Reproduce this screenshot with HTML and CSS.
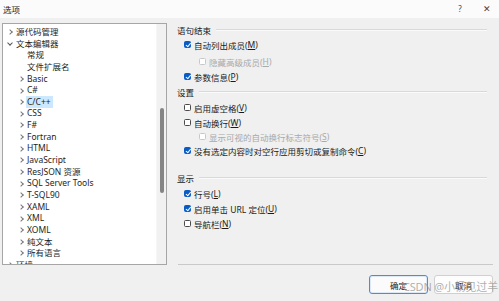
FILE: index.html
```html
<!DOCTYPE html>
<html>
<head>
<meta charset="utf-8">
<link rel="stylesheet" href="styles.css">
</head>
<body>
<div class="dialog">
  <div class="titlebar">
    <span class="title">选项</span>
    <span class="tb-help">?</span>
    <span class="tb-close">✕</span>
  </div>
  <div class="main">
    <div class="tree">
      <div class="tree-list">
        <div class="node l0"><span class="chev right"></span>源代码管理</div>
        <div class="node l0"><span class="chev down"></span>文本编辑器</div>
        <div class="node l1"><span class="chev none"></span>常规</div>
        <div class="node l1"><span class="chev none"></span>文件扩展名</div>
        <div class="node l1"><span class="chev right"></span>Basic</div>
        <div class="node l1"><span class="chev right"></span>C#</div>
        <div class="node l1"><span class="chev right"></span><span class="sel">C/C++</span></div>
        <div class="node l1"><span class="chev right"></span>CSS</div>
        <div class="node l1"><span class="chev right"></span>F#</div>
        <div class="node l1"><span class="chev right"></span>Fortran</div>
        <div class="node l1"><span class="chev right"></span>HTML</div>
        <div class="node l1"><span class="chev right"></span>JavaScript</div>
        <div class="node l1"><span class="chev right"></span>ResJSON 资源</div>
        <div class="node l1"><span class="chev right"></span>SQL Server Tools</div>
        <div class="node l1"><span class="chev right"></span>T-SQL90</div>
        <div class="node l1"><span class="chev right"></span>XAML</div>
        <div class="node l1"><span class="chev right"></span>XML</div>
        <div class="node l1"><span class="chev right"></span>XOML</div>
        <div class="node l1"><span class="chev right"></span>纯文本</div>
        <div class="node l1"><span class="chev right"></span>所有语言</div>
        <div class="node l0"><span class="chev right"></span>环境</div>
      </div>
      <div class="scrollbar"><div class="thumb"></div></div>
    </div>
    <div class="panel">
      <div class="group-head h1"><span>语句结束</span><i class="rule"></i></div>
      <div class="opt r-m"><span class="cb on"></span>自动列出成员(<u>M</u>)</div>
      <div class="opt sub dis r-h"><span class="cb"></span>隐藏高级成员(<u>H</u>)</div>
      <div class="opt r-p"><span class="cb on"></span>参数信息(<u>P</u>)</div>
      <div class="group-head h2"><span>设置</span><i class="rule"></i></div>
      <div class="opt r-v"><span class="cb"></span>启用虚空格(<u>V</u>)</div>
      <div class="opt r-w"><span class="cb"></span>自动换行(<u>W</u>)</div>
      <div class="opt sub dis r-s"><span class="cb"></span>显示可视的自动换行标志符号(<u>S</u>)</div>
      <div class="opt r-c"><span class="cb on"></span>没有选定内容时对空行应用剪切或复制命令(<u>C</u>)</div>
      <div class="group-head h3"><span>显示</span><i class="rule"></i></div>
      <div class="opt r-l"><span class="cb on"></span>行号(<u>L</u>)</div>
      <div class="opt r-u"><span class="cb on"></span>启用单击 URL 定位(<u>U</u>)</div>
      <div class="opt r-n"><span class="cb"></span>导航栏(<u>N</u>)</div>
      <div class="sep"></div>
    </div>
  </div>
  <div class="footer">
    <button class="btn default">确定</button>
    <button class="btn">取消</button>
    <span class="watermark">CSDN @小杨见过羊</span>
  </div>
</div>
</body>
</html>
```
FILE: styles.css
```css
* { box-sizing: border-box; }
html, body { margin: 0; padding: 0; }
body {
  width: 499px;
  height: 301px;
  overflow: hidden;
  background: #f0f0f0;
  font-family: "Noto Sans", "Noto Sans CJK SC", sans-serif;
  font-size: 8.5px;
  color: #1a1a1a;
}
.dialog { width: 499px; height: 301px; display: flex; flex-direction: column; position: relative; }
.titlebar {
  height: 18px;
  background: #fbfbfb;
  display: flex;
  align-items: center;
  padding: 0 0 1px 3px;
  font-size: 8.5px;
}
.title { flex: 1; }
.tb-help { width: 30px; text-align: center; font-size: 8px; color: #444; }
.tb-close { width: 24px; text-align: center; font-size: 9px; color: #444; }
.main { display: flex; height: 248px; padding: 5px 0 0 2px; }
.tree {
  width: 165px;
  height: 242px;
  background: #fff;
  border: 1px solid #a6a6a6;
  display: flex;
  overflow: hidden;
}
.tree-list { flex: 1; padding-top: 2px; overflow: hidden; }
.node {
  height: 11.65px;
  line-height: 11.65px;
  display: flex;
  align-items: center;
  white-space: nowrap;
  color: #1e1e1e;
}
.node.l0 { padding-left: 3px; }
.node.l1 { padding-left: 14px; }
.chev { width: 10px; height: 11px; display: inline-block; position: relative; flex: none; }
.chev.right::before {
  content: "";
  position: absolute;
  left: 2px; top: 4px;
  width: 3px; height: 3px;
  border-right: 1px solid #777;
  border-top: 1px solid #777;
  transform: rotate(45deg);
}
.chev.down::before {
  content: "";
  position: absolute;
  left: 2px; top: 3px;
  width: 3px; height: 3px;
  border-right: 1px solid #555;
  border-bottom: 1px solid #555;
  transform: rotate(45deg);
}
.sel { background: #cce8ff; padding: 0 2px 0 1px; margin-left: -1px; }
.scrollbar { width: 10px; background: #f1f1f1; border-left: 1px solid #f6f6f6; padding: 84px 0 0 3px; }
.thumb { width: 4px; height: 85px; background: #858585; border-radius: 2px; }
.panel { flex: 1; padding: 0 6px 0 10px; display: flex; flex-direction: column; }
.group-head { display: flex; align-items: center; height: 14px; color: #1a1a1a; }
.group-head .rule { flex: 1; height: 2px; background: #d9d9d9; border-bottom: 1px solid #fafafa; margin: 0 6px 0 5px; }
.h1 { margin-top: 0px; }
.h2 { margin-top: 1px; }
.h3 { margin-top: 13px; }
.opt { display: flex; align-items: center; height: 15px; padding-left: 7px; white-space: nowrap; }
.opt.sub { padding-left: 22px; }
.opt.dis { color: #a9a9a9; }
.r-m { margin-top: 0px; }
.r-h { margin-top: 2px; }
.r-p { margin-top: 0px; }
.r-v { margin-top: 1px; }
.r-w { margin-top: 0px; }
.r-s { margin-top: -1px; }
.r-c { margin-top: -1px; }
.r-l { margin-top: 1px; }
.r-u { margin-top: 0px; }
.r-n { margin-top: 0px; }
u { text-decoration: underline; text-underline-offset: 1px; }
.cb {
  width: 7px; height: 7px;
  border: 1px solid #4a4a4a;
  border-radius: 1.5px;
  background: #fff;
  margin-right: 3px;
  position: relative;
  flex: none;
}
.opt.dis .cb { border-color: #c8c8c8; }
.cb.on { background: #0a5cc4; border-color: #0a5cc4; }
.cb.on::after {
  content: "";
  position: absolute;
  left: 1.5px; top: 0px;
  width: 2px; height: 3.5px;
  border-right: 1px solid #fff;
  border-bottom: 1px solid #fff;
  transform: rotate(40deg);
}
.sep { height: 1px; background: #c9c9c9; margin-top: 33px; margin-left: 1px; }
.footer { display: flex; justify-content: flex-end; gap: 6px; padding: 9px 6px 0 0; }
.btn {
  width: 59px; height: 19px;
  font-family: "Noto Sans", "Noto Sans CJK SC", sans-serif;
  font-size: 8.5px;
  color: #1a1a1a;
  background: #fdfdfd;
  border: 1px solid #d0d0d0;
  border-radius: 3px;
  padding: 0;
}
.btn.default { border: 1px solid #5a88c8; background: #fbfbfb; box-shadow: inset 0 0 0 1px #dce8f6; }
.watermark {
  position: absolute;
  left: 403px; top: 278px;
  font-size: 11px;
  color: rgba(150, 150, 150, 0.75);
  white-space: nowrap;
  letter-spacing: -0.2px;
}
```
